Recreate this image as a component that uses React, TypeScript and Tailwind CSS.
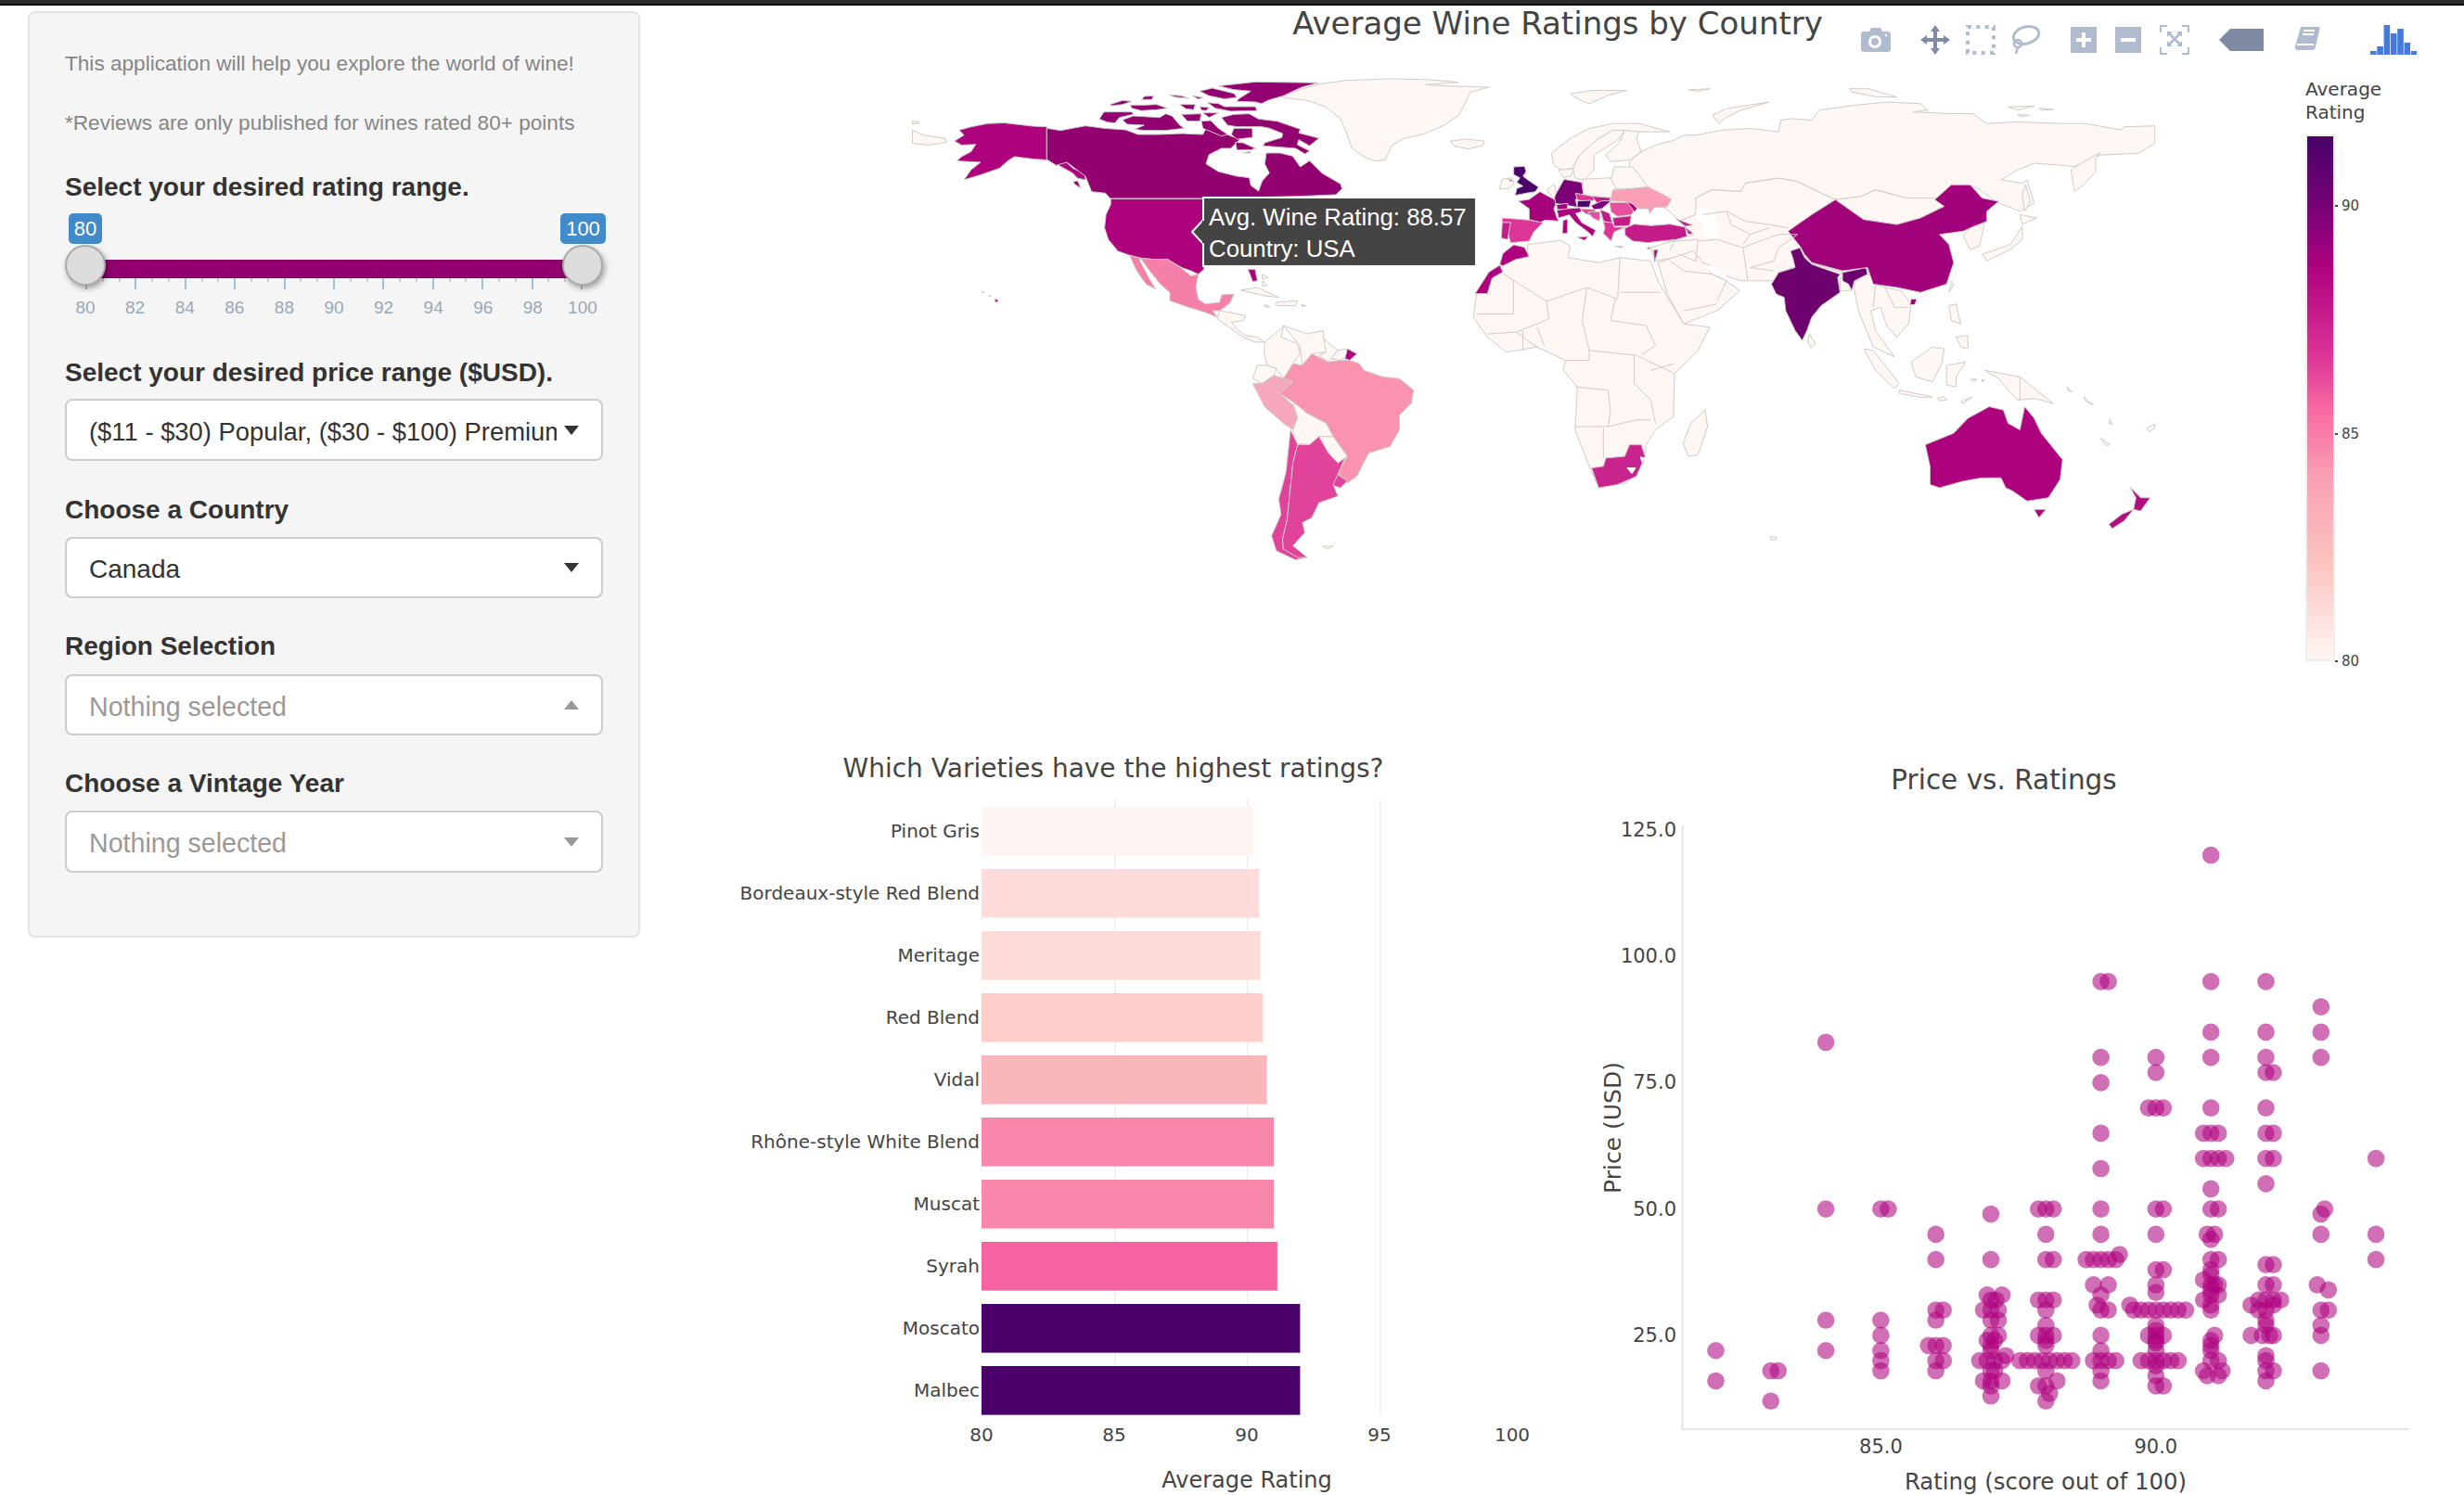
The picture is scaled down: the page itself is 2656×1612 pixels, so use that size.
import React from "react";

const LAND = "#fff7f3";
const EDGE = "#cfcbc9";
const CA = "#93006f";
type Poly = [string, string];

const z4: Poly[] = [
  [LAND, "825,125 870,100 910,85 960,75 1050,70 1130,72 1200,80 1130,88 1180,92 1265,95 1225,110 1215,140 1200,180 1190,190 1170,210 1130,235 1085,250 1060,270 1045,315 1020,318 1000,305 975,280 965,240 950,190 920,155 880,135 850,130"],
  [LAND, "1183,258 1215,252 1255,258 1250,272 1220,282 1190,272"],
  [LAND, "46,225 70,240 115,250 118,262 80,270 46,265"],
  [LAND, "46,198 60,200 60,205 46,206"],
  ["#ae017e", "330,215 300,213 240,203 205,205 170,215 145,225 155,240 135,258 150,270 180,268 170,290 150,305 140,318 165,320 190,322 170,345 155,375 190,360 230,340 250,315 262,305 300,312 330,315 345,322 370,320 385,340 410,355 412,375 395,370 385,355 360,335 330,315"],
  ["#ae017e", "465,432 662,432 662,645 650,660 635,650 615,640 605,632 585,615 555,615 530,612 505,603 480,590 460,555 452,520 455,480 465,450"],
  ["#ae017e", "755,645 770,645 775,680 765,682"],
  ["#ae017e", "221,735 228,738 225,745 220,742"],
  ["#ae017e", "193,712 197,714 195,717"],
  ["#ae017e", "208,724 212,726 209,728"],
  ["#f47fa9", "505,603 530,612 555,615 585,615 605,632 635,665 650,660 645,700 650,735 665,750 695,745 700,722 725,720 718,745 705,760 695,770 680,770 690,790 665,775 630,760 590,740 590,715 570,690 545,645 530,615 525,615 545,670 560,705 540,690 520,650"],
  [LAND, "695,770 715,775 750,785 745,800 720,805 735,830 750,845 775,850 790,865 770,865 745,850 720,825 690,795"],
  [LAND, "740,708 775,700 820,730 790,725"],
  [LAND, "815,745 860,740 855,755 815,755"],
  [LAND, "785,660 798,670 785,675"],
  [LAND, "787,680 795,695 785,695"],
  [LAND, "790,752 802,758 792,760"],
  [LAND, "868,752 878,755 870,758"],
  [LAND, "790,865 825,825 830,815 825,850 860,870 865,900 850,930 850,970 830,975 815,945 795,935 790,900"],
  [LAND, "830,815 880,840 915,830 915,855 935,880 920,895 890,900 870,935 865,880 850,850"],
  [LAND, "915,855 945,890 925,925 905,905 920,895"],
  [LAND, "945,890 965,885 965,905 950,920 930,915"],
  ["#ae017e", "965,885 985,900 970,920 960,915"],
  [LAND, "775,935 795,935 815,945 810,965 785,990 765,975"],
  ["#f8a8bd", "765,990 785,990 810,965 830,975 850,985 822,1020 850,1055 860,1095 850,1130 830,1110 790,1060"],
  ["#f993b0", "850,930 870,935 890,900 925,925 950,920 970,920 990,930 1000,950 1040,970 1075,975 1105,1010 1100,1050 1075,1085 1075,1130 1055,1180 1010,1200 985,1270 965,1290 945,1260 965,1210 935,1150 920,1110 880,1080 850,1045 822,1020 850,985 830,975"],
  [LAND, "850,1045 880,1080 920,1110 935,1150 905,1150 885,1175 858,1170 850,1130 860,1095"],
  [LAND, "905,1150 935,1150 965,1210 945,1230 925,1200"],
  ["#e2439a", "940,1260 965,1285 950,1305 930,1295"],
  ["#e2439a", "845,1130 860,1175 850,1230 842,1340 838,1400 828,1460 830,1490 880,1515 855,1522 815,1495 805,1450 825,1385 820,1340 835,1260"],
  ["#e2439a", "860,1175 885,1175 905,1150 925,1200 945,1230 960,1215 935,1295 945,1330 905,1350 890,1395 870,1410 875,1440 850,1480 880,1515 860,1515 830,1490 828,1460 838,1400 842,1340 850,1230"],
  [LAND, "912,1482 935,1480 925,1490"],
];

const z12: Poly[] = [
  [CA, "85,205 130,212 210,197 270,205 340,210 380,225 445,225 525,222 590,225 600,205 620,205 685,232 710,240 700,250 680,270 650,270 610,290 600,320 640,345 700,360 740,365 745,390 770,408 782,375 805,350 790,320 795,285 840,285 880,295 905,330 935,310 975,350 1035,385 1040,400 1020,420 900,425 590,432 290,432 275,415 230,410 210,360 150,315 115,325 85,305"],
  [CA, "650,170 690,160 740,158 770,175 830,182 905,208 900,220 965,237 935,262 900,242 895,258 935,278 920,288 890,270 785,262 790,252 845,235 848,222 805,205 780,200 700,200 670,195"],
  ["#ffffff", "795,222 820,218 835,228 800,232"],
  [CA, "695,250 720,252 760,270 745,275 700,275"],
  [CA, "720,285 745,280 740,285"],
  [CA, "690,205 750,205 750,235 700,240 682,225"],
  [CA, "640,68 760,55 965,58 910,72 850,100 800,115 780,125 760,120 700,118 705,110 745,85 690,80"],
  [CA, "580,85 620,75 690,92 700,105 660,110 610,100"],
  [CA, "605,122 640,125 660,135 760,135 765,148 680,150 630,140"],
  [CA, "480,97 520,100 545,108 500,104"],
  [CA, "555,100 590,105 575,110"],
  [CA, "400,102 430,100 425,112 392,112"],
  [CA, "290,128 330,115 360,118 330,128 295,132"],
  [CA, "355,130 400,130 440,128 475,140 440,145 390,148 360,140"],
  [CA, "515,128 565,128 560,145 535,142"],
  [CA, "580,135 610,138 600,148 585,146"],
  [CA, "255,175 270,152 360,152 365,160 320,170 305,188 280,185"],
  [CA, "330,178 365,165 450,170 470,158 490,165 515,195 530,205 470,212 400,212 370,208 400,195 345,192"],
  [CA, "520,160 585,158 580,182 540,182"],
  [CA, "590,155 640,155 610,170"],
  [CA, "585,182 615,180 640,205 670,225 650,230 590,205"],
  [CA, "170,378 185,375 195,398 178,388"],
];

const z5: Poly[] = [
  [LAND, "440,270 480,255 500,240 525,240 580,225 640,220 700,230 705,195 725,190 770,195 785,165 860,150 930,140 1000,145 1015,165 985,170 1060,175 1110,175 1140,205 1200,200 1300,205 1350,205 1425,225 1430,215 1495,212 1495,265 1460,295 1380,300 1325,335 1290,330 1240,325 1205,345 1170,375 1215,385 1225,375 1240,445 1210,470 1165,445 1120,400 1085,390 1060,420 1030,430 1000,435 970,430 905,405 875,425 820,435 790,415 740,380 700,370 630,385 620,410 560,405 525,430 535,465 525,480 490,500 470,470 440,445 410,405 400,380 385,355 385,320 410,290"],
  [LAND, "1380,292 1340,325 1318,345 1325,410 1345,390 1370,350 1370,310"],
  [LAND, "560,180 590,160 680,140 620,165 585,190 575,205"],
  [LAND, "260,115 305,105 380,105 340,120 300,145 275,130"],
  [LAND, "510,103 555,100 530,108"],
  [LAND, "850,100 890,100 950,125 910,125 855,110"],
  [LAND, "1185,155 1240,152 1205,165"],
  [LAND, "1250,158 1280,163 1255,165"],
  [LAND, "1205,178 1230,180 1210,184"],
  [LAND, "1222,390 1232,440 1220,470 1215,420"],
  [LAND, "220,295 260,250 300,220 350,205 405,205 470,230 405,230 350,225 315,255 280,300 265,340 240,345 225,330"],
  [LAND, "280,300 315,255 350,225 375,225 360,255 310,300 310,345 290,375 270,370 265,340"],
  [LAND, "375,225 405,230 400,250 410,290 385,315 345,320 335,300 365,260"],
  [LAND, "170,570 240,558 260,575 255,610 320,625 365,610 430,620 445,680 470,740 500,810 555,820 530,890 480,960 478,1090 440,1130 420,1175 415,1230 380,1290 320,1305 300,1240 270,1130 275,1000 245,950 250,920 190,880 125,895 85,850 55,790 62,720 100,650 120,630 170,600"],
  [LAND, "545,1070 550,1120 530,1205 510,1210 498,1170 515,1110"],
  ["#c9248e", "410,1175 418,1210 400,1270 360,1295 320,1305 305,1245 330,1240 335,1215 375,1210 385,1175"],
  ["#ffffff", "380,1245 398,1245 390,1262"],
  ["#ffffff", "408,1212 418,1215 412,1228"],
  [LAND, "525,430 560,405 620,410 630,385 700,370 740,380 790,415 820,435 770,480 720,530 750,580 760,625 700,655 690,680 620,680 590,665 550,630 530,625 480,610 440,620 430,580 520,540 490,500 525,480"],
  [LAND, "445,625 520,590 560,660 590,680 618,710 570,770 500,810 465,720"],
  ["#ffffff", "528,465 550,460 565,480 575,520 570,555 545,545 540,510 525,490"],
  ["#ffffff", "540,630 565,640 590,665 560,655"],
  [LAND, "820,435 875,425 905,405 970,430 1030,430 1050,455 1000,490 950,510 880,495"],
  [LAND, "830,670 855,680 850,710 830,710"],
  [LAND, "765,625 835,655 825,668 775,645"],
  [LAND, "860,685 890,650 905,690 925,700 960,710 980,750 975,810 950,850 930,820 915,760 895,770 905,830 945,910 900,880 870,775 860,710"],
  [LAND, "765,840 778,870 768,882 762,865"],
  ["#6f016f", "725,590 745,580 755,610 770,630 830,660 825,670 830,715 790,755 770,790 760,830 750,860 735,830 715,770 712,730 695,720 685,690 700,655 735,640 730,610"],
  ["#6f016f", "835,655 885,640 888,660 860,680 855,710 848,690 835,680"],
  ["#a1017b", "720,530 770,480 820,435 880,495 950,510 1000,490 1050,455 1030,435 1065,390 1105,390 1130,430 1165,440 1140,470 1140,500 1090,530 1040,540 1060,570 1070,625 1055,690 1000,715 950,700 900,690 888,640 835,650 770,625 755,600 745,575"],
  ["#a1017b", "980,735 992,735 988,752 978,752"],
  [LAND, "1065,680 1070,690 1060,715"],
  [LAND, "1105,520 1135,505 1125,575 1105,585 1090,545"],
  [LAND, "1130,600 1190,570 1215,515 1215,555 1190,585 1140,620"],
  [LAND, "1210,480 1245,490 1215,510"],
  [LAND, "880,885 900,890 955,990 945,1005 905,950"],
  [LAND, "955,1010 1025,1030 1000,1032 955,1020"],
  [LAND, "980,925 1025,880 1050,885 1045,930 1025,985 990,970"],
  [LAND, "1055,935 1095,925 1075,970 1075,1000 1055,995"],
  [LAND, "1135,950 1210,970 1280,1050 1240,1035 1205,1040 1185,1010 1165,975"],
  [LAND, "1060,755 1075,750 1085,810 1065,800"],
  [LAND, "1075,850 1100,845 1100,885 1085,880"],
  [LAND, "1085,1045 1110,1030 1090,1050"],
  [LAND, "1035,1035 1050,1030 1055,1040 1040,1042"],
  [LAND, "1105,978 1118,975 1115,985"],
  [LAND, "1130,978 1135,980 1130,985"],
  [LAND, "1310,1000 1320,1015 1312,1012"],
  [LAND, "1345,1030 1365,1055 1350,1045"],
  [LAND, "1400,1098 1405,1115 1398,1110"],
  [LAND, "1380,1155 1400,1175 1392,1178"],
  [LAND, "1478,1125 1495,1113 1495,1125 1482,1135"],
  [LAND, "683,1452 696,1455 692,1463 684,1461"],
  ["#ae017e", "1010,1175 1070,1140 1100,1095 1145,1060 1175,1070 1185,1110 1210,1130 1220,1060 1240,1095 1255,1140 1300,1220 1295,1280 1270,1335 1225,1345 1195,1315 1180,1305 1170,1275 1130,1275 1090,1285 1040,1305 1020,1295 1020,1240"],
  ["#ae017e", "1240,1370 1265,1370 1250,1395"],
  ["#b0107f", "1443,1303 1465,1335 1485,1335 1465,1375 1450,1370 1455,1335"],
  ["#b0107f", "1450,1370 1430,1405 1405,1428 1398,1415 1425,1385"],
];

const z10: Poly[] = [
  [LAND, "378,100 470,95 485,125 470,160 410,155 358,143 380,140"],
  [LAND, "470,100 480,60 540,60 590,125 540,130 485,130"],
  [LAND, "300,70 350,65 340,90 315,95"],
  [LAND, "262,135 285,115 295,150 285,165"],
  [LAND, "108,132 118,100 150,95 155,115 140,130"],
  ["#49006a", "137,98 152,105 145,107"],
  ["#49006a", "155,60 190,58 195,75 185,90 205,105 235,125 225,140 195,145 160,152 165,130 185,122 165,110 175,95 155,85"],
  ["#a5017d", "170,170 205,165 240,140 295,170 285,195 295,225 300,235 255,232 240,240 205,230 205,195"],
  ["#7a0177", "290,150 318,100 375,110 380,145 355,165 360,190 290,178 287,160"],
  ["#dd3497", "355,145 410,155 425,165 385,175 360,165"],
  ["#c51b8a", "410,155 470,160 460,175 425,178"],
  ["#a5017d", "293,182 330,178 328,198 297,198"],
  ["#49006a", "362,170 405,168 400,190 360,190"],
  ["#7a0177", "405,185 440,170 470,170 440,195 415,198"],
  ["#ae017e", "295,200 330,195 370,192 375,205 355,210 375,240 420,265 410,285 395,270 355,240 335,215 300,225"],
  ["#ae017e", "315,232 330,230 328,275 312,275"],
  ["#ae017e", "360,287 395,285 385,298"],
  ["#e2439a", "370,195 415,198 440,225 400,215 385,210"],
  ["#e8509f", "395,205 435,205 432,235 410,225"],
  ["#c51b8a", "435,198 465,210 475,245 445,235"],
  ["#e8509f", "465,175 520,175 545,200 535,215 490,220 470,205"],
  ["#ae017e", "520,172 535,172 555,195 545,205"],
  ["#c51b8a", "475,225 535,218 530,250 480,252"],
  ["#dd3497", "445,238 475,240 480,255 515,255 480,270 470,300 445,275 450,258"],
  ["#c51b8a", "515,258 545,245 600,250 660,245 710,255 715,285 680,295 630,300 590,305 540,300 515,280"],
  ["#c51b8a", "680,228 735,248 710,252"],
  ["#c51b8a", "710,255 735,275 720,278"],
  ["#c51b8a", "585,322 598,320 592,327"],
  ["#c51b8a", "482,316 510,318 500,321"],
  ["#ae017e", "608,328 622,328 610,370"],
  ["#fa9fb5", "470,160 475,135 540,130 590,125 650,155 665,165 650,190 610,190 595,210 590,195 560,195 540,180 520,172 470,170"],
  ["#dd3497", "118,225 205,232 250,240 220,270 205,300 145,305 135,270 145,240 118,240"],
  ["#c51b8a", "118,240 145,240 135,295 115,290"],
  ["#ae017e", "155,312 190,320 205,350 160,360 120,380 110,375 120,340"],
  ["#ae017e", "75,400 110,378 120,400 85,420 70,470 30,470"],
];

const borderLines = [
  "120,660 210,742 295,700 360,735 365,610",
  "365,715 450,715",
  "295,700 285,800 300,890 300,920",
  "140,680 140,780 62,780",
  "210,742 215,795 145,835",
  "345,800 355,735",
  "345,800 420,815 440,875 410,905",
  "300,890 400,905 480,960",
  "395,905 395,990 430,1040 440,1110",
  "270,1000 340,1010 345,1075 340,1120 270,1120",
  "330,1125 330,1215",
  "340,1120 400,1100 430,1100",
  "250,920 300,920",
  "85,840 145,835 190,880",
  "160,830 160,890",
  "190,820 205,875",
  "430,950 480,930",
  "540,480 590,470 630,500 680,510 720,520",
  "590,470 600,510 640,540 680,520",
  "640,540 625,570",
  "625,580 660,560 700,540 740,540 700,580 690,620 640,640",
  "640,640 690,650",
  "530,560 570,555 625,580 635,680",
  "480,560 530,555 525,620 490,600",
  "450,560 480,560 470,590",
  "470,620 500,650 560,660 590,680",
  "500,770 570,750",
  "590,680 570,740",
  "905,690 900,760",
  "925,700 945,760 975,760",
  "1210,970 1210,1040",
];

const GRAD = "bg-[linear-gradient(to_bottom,#49006a_0%,#7a0177_14%,#ae017e_25%,#dd3497_42%,#f768a1_52%,#fa9fb5_65%,#fcc5c0_82%,#fde0dd_92%,#fff7f3_100%)]";

function PolyGroup({ items, t }: { items: Poly[]; t: string }) {
  return (
    <g transform={t}>
      {items.map(([fill, pts], i) => (
        <polygon key={i} points={pts} fill={fill} stroke={fill === "#ffffff" ? "#ffffff" : EDGE} strokeWidth={1} vectorEffect="non-scaling-stroke" strokeLinejoin="round" />
      ))}
    </g>
  );
}

const bars: [string, number, string][] = [
  ["Pinot Gris", 1351, "#fff5f2"],
  ["Bordeaux-style Red Blend", 1357.4, "#fddcdb"],
  ["Meritage", 1358.6, "#fddbd7"],
  ["Red Blend", 1361, "#fdcdc9"],
  ["Vidal", 1365.6, "#fbb6bc"],
  ["Rhône-style White Blend", 1373, "#f986ab"],
  ["Muscat", 1373, "#f986ab"],
  ["Syrah", 1376.8, "#f564a0"],
  ["Moscato", 1401.4, "#49006a"],
  ["Malbec", 1401.4, "#49006a"],
];

const pts: [number, number, number?][] = [
  [82,22],[82,16],[83,18],[83,18,1],[83,12],[84,83],[84,50],[84,28],[84,22],
  [85,50],[85,50,1],[85,28],[85,25],[85,22],[85,20],[85,18],
  [86,45],[86,40],[86,30],[86,30,1],[86,28],[86,23,-1],[86,23],[86,23,1],[86,20],[86,20,1],[86,18],
  [87,49],[87,40],[87,33,-.5],[87,33,1.5],[87,32],[87,32,.7],[87,30,-1],[87,30],[87,30,1],[87,28],[87,28,1],[87,25],[87,25,1],[87,24,-.5],[87,24,.5],[87,23],[87,22],[87,21,2],[87,20,-1.5],[87,20,-.5],[87,20,.5],[87,20,1.5],[87,18],[87,18,.5],[87,16,-1],[87,16],[87,16,1.5],[87,15],[87,13],
  [88,50,-1],[88,50],[88,50,1],[88,45],[88,40],[88,40,1],[88,32,-1],[88,32],[88,32,1],[88,30],[88,27],[88,25,-1],[88,25],[88,25,1],[88,24],[88,23],[88,20,-3.5],[88,20,-2.5],[88,20,-1.5],[88,20,-.5],[88,20,.5],[88,20,1.5],[88,20,2.5],[88,20,3.5],[88,18],[88,15,-1],[88,15],[88,16,1.5],[88,13.5,.5],[88,12],
  [89,95],[89,95,1],[89,80],[89,75],[89,65],[89,58],[89,50],[89,45],[89,41,2.5],[89,40,-2],[89,40,-1],[89,40],[89,40,1],[89,40,2],[89,35,-1],[89,35,1],[89,33],[89,31,-.5],[89,30],[89,30,1],[89,25],[89,22],[89,20,-1],[89,20],[89,20,1],[89,20,2],[89,18],[89,16],
  [90,80],[90,77],[90,70,-1],[90,70],[90,70,1],[90,50],[90,50,1],[90,45],[90,38],[90,38,1],[90,35],[90,33.5],[90,31,-3.5],[90,30,-3],[90,30,-2],[90,30,-1],[90,30],[90,30,1],[90,30,2],[90,30,3],[90,30,4],[90,27],[90,26],[90,25,-1],[90,25],[90,25,1],[90,24],[90,23.5],[90,22],[90,20,-2],[90,20,-1],[90,20],[90,20,1],[90,20,2],[90,20,3],[90,19],[90,17],[90,15],[90,15,1],
  [91,120],[91,95],[91,85],[91,80],[91,70],[91,65,-1],[91,65],[91,65,1],[91,60,-1],[91,60],[91,60,1],[91,60,2],[91,54],[91,50],[91,50,1],[91,45,-.5],[91,45,.5],[91,44],[91,40],[91,40,1],[91,38],[91,37],[91,36,-1],[91,35],[91,35,.5],[91,35,1],[91,34],[91,33],[91,33,1],[91,32,-1],[91,31],[91,30],[91,25,.5],[91,24],[91,23],[91,22],[91,20],[91,20,1],[91,18,-1],[91,18,1.5],[91,17,-.5],[91,17,1],
  [92,95],[92,85],[92,80],[92,77],[92,77,1],[92,70],[92,65],[92,65,1],[92,60],[92,60,1],[92,55],[92,39],[92,39,1],[92,35],[92,35,1],[92,32,-1],[92,32],[92,32,1],[92,32,2],[92,31,-2],[92,30,-1],[92,31,1],[92,30],[92,28],[92,27],[92,25,-2],[92,25,-.5],[92,25,.5],[92,25,1],[92,21],[92,20],[92,18],[92,18,1],[92,16],
  [93,90],[93,85],[93,80],[93,50,.5],[93,49],[93,45],[93,35,-.5],[93,34,1],[93,30],[93,30,1],[93,27],[93,25],[93,18],
  [94,60],[94,45],[94,40],
];

function Caret({ up, color }: { up?: boolean; color: string }) {
  return (
    <svg width="16" height="10" viewBox="0 0 16 10" className="shrink-0">
      <polygon points={up ? "8,0 16,10 0,10" : "0,0 16,0 8,10"} fill={color} />
    </svg>
  );
}

function Select({ text, muted, up, h, size }: { text: string; muted?: boolean; up?: boolean; h: string; size: string }) {
  return (
    <div className={`${h} w-[580px] rounded-lg border-2 border-[#cccccc] bg-white flex items-center pl-[24px] pr-[24px]`}>
      <div className={`w-[504px] mr-[8px] pt-[4px] whitespace-nowrap overflow-hidden ${size} ${muted ? "text-[#999999]" : "text-[#333333]"}`}>{text}</div>
      <Caret up={up} color={muted ? "#999999" : "#333333"} />
    </div>
  );
}

function Slider() {
  const labels = ["80", "82", "84", "86", "88", "90", "92", "94", "96", "98", "100"];
  return (
    <div className="relative mt-[8px] h-[122px] w-[580px]">
      <div className="absolute left-[4px] top-[2px] h-[33px] w-[36px] rounded-[5px] bg-[#428bca] text-white text-[22px] flex items-center justify-center">80</div>
      <div className="absolute left-[534px] top-[2px] h-[33px] w-[49px] rounded-[5px] bg-[#428bca] text-white text-[22px] flex items-center justify-center">100</div>
      <div className="absolute left-[22px] top-[52px] h-[20px] w-[536px] bg-[#93006f] border-y border-[#82005f]" />
      <div className="absolute left-[22px] top-[72px] w-[536px] flex justify-between">
        {Array.from({ length: 31 }).map((_, i) => (
          <div key={i} className={i % 3 === 0 ? "w-[2px] h-[12px] bg-[#9cc0df]" : "w-[2px] h-[4px] bg-[#cccccc]"} />
        ))}
      </div>
      <div className="absolute left-[22px] top-[92px] w-[536px] flex justify-between">
        {labels.map((l) => (
          <div key={l} className="w-0 flex justify-center text-[19px] leading-[24px] text-[#9aa8b5]">{l}</div>
        ))}
      </div>
      <div className="absolute left-0 top-[36px] h-[44px] w-[44px] rounded-full bg-[#dddddd] border-2 border-[#aaaaaa] shadow-[2px_3px_6px_rgba(0,0,0,0.35)]" />
      <div className="absolute left-[536px] top-[36px] h-[44px] w-[44px] rounded-full bg-[#dddddd] border-2 border-[#aaaaaa] shadow-[2px_3px_6px_rgba(0,0,0,0.35)]" />
    </div>
  );
}

function Sidebar() {
  const label = "h-[36px] leading-[36px] text-[28px] font-bold text-[#333333] whitespace-nowrap";
  const para = "h-[32px] leading-[32px] text-[22.6px] text-[#868686] whitespace-nowrap";
  return (
    <aside className="ml-[30px] mt-[6px] h-[999px] w-[660px] shrink-0 rounded-lg border-2 border-[#e3e3e3] bg-[#f5f5f5] pt-[39px] pl-[38px]">
      <p className={para}>This application will help you explore the world of wine!</p>
      <p className={`${para} mt-[32px]`}>*Reviews are only published for wines rated 80+ points</p>
      <div className={`${label} mt-[35px]`}>Select your desired rating range.</div>
      <Slider />
      <div className={`${label} mt-[34px]`}>Select your desired price range ($USD).</div>
      <div className="mt-[10px]"><Select h="h-[67px]" size="text-[27.4px]" text="($11 - $30) Popular, ($30 - $100) Premium" /></div>
      <div className={`${label} mt-[35px]`}>Choose a Country</div>
      <div className="mt-[11px]"><Select h="h-[66px]" size="text-[28px]" text="Canada" /></div>
      <div className={`${label} mt-[34px]`}>Region Selection</div>
      <div className="mt-[12px]"><Select h="h-[66px]" size="text-[28.6px]" text="Nothing selected" muted up /></div>
      <div className={`${label} mt-[34px]`}>Choose a Vintage Year</div>
      <div className="mt-[11px]"><Select h="h-[67px]" size="text-[28.6px]" text="Nothing selected" muted /></div>
    </aside>
  );
}

const L = "#b1bbd0";
const D = "#7f8ba5";

function Toolbar() {
  return (
    <div className="absolute left-[1316px] top-[15px] flex items-start">
      <svg width="32" height="26" viewBox="0 0 32 26" className="mt-[9px]">
        <path d="M3 4h6l2-4h10l2 4h6a3 3 0 0 1 3 3v16a3 3 0 0 1-3 3H3a3 3 0 0 1-3-3V7a3 3 0 0 1 3-3z" fill={L} />
        <circle cx="15" cy="15" r="7" fill="#ffffff" /><circle cx="15" cy="15" r="4" fill={L} /><circle cx="27" cy="8" r="1.2" fill="#fff" />
      </svg>
      <svg width="32" height="32" viewBox="0 0 32 32" className="ml-[32px] mt-[6px]">
        <path d="M16 0l5 7h-3v7h7v-3l7 5-7 5v-3h-7v7h3l-5 7-5-7h3v-7H7v3l-7-5 7-5v3h7V7h-3z" fill={D} />
      </svg>
      <svg width="32" height="32" viewBox="0 0 32 32" className="ml-[17px] mt-[6px]">
        <rect x="2" y="2" width="28" height="28" fill="none" stroke={L} strokeWidth="4" strokeDasharray="4 5.33" />
      </svg>
      <svg width="32" height="32" viewBox="0 0 32 32" className="ml-[16px] mt-[6px]">
        <ellipse cx="17" cy="11" rx="14" ry="9" fill="none" stroke={L} strokeWidth="3" transform="rotate(-15 17 11)" />
        <circle cx="8" cy="20" r="4" fill="none" stroke={L} strokeWidth="2.5" />
        <path d="M8 24l-2 7" stroke={L} strokeWidth="2.5" fill="none" />
      </svg>
      <svg width="28" height="28" viewBox="0 0 28 28" className="ml-[33px] mt-[8px]">
        <rect width="28" height="28" fill={L} /><path d="M12 6h4v6h6v4h-6v6h-4v-6H6v-4h6z" fill="#fff" />
      </svg>
      <svg width="28" height="28" viewBox="0 0 28 28" className="ml-[20px] mt-[8px]">
        <rect width="28" height="28" fill={L} /><rect x="6" y="12" width="16" height="4" fill="#fff" />
      </svg>
      <svg width="32" height="32" viewBox="0 0 32 32" className="ml-[20px] mt-[6px]">
        <path d="M1 8V1h7M24 1h7v7M31 24v7h-7M8 31H1v-7" fill="none" stroke={L} strokeWidth="2" />
        <path d="M8 7h6l-2 2 4 4 4-4-2-2h6v6l-2-2-4 4 4 4 2-2v6h-6l2-2-4-4-4 4 2 2H8v-6l2 2 4-4-4-4-2 2z" fill={L} />
      </svg>
      <svg width="48" height="24" viewBox="0 0 48 24" className="ml-[32px] mt-[10px]">
        <polygon points="0,12 12,0 48,0 48,24 12,24" fill={D} />
      </svg>
      <svg width="28" height="26" viewBox="0 0 28 26" className="ml-[33px] mt-[8px]">
        <path d="M7 0h21l-5 21a4 4 0 0 1-4 4H4a3 3 0 0 1-3-4z" fill={L} />
        <path d="M10 4h12M9 8h12" stroke="#fff" strokeWidth="2" />
        <path d="M3 19h18" stroke="#fff" strokeWidth="2" />
      </svg>
      <svg width="50" height="32" viewBox="0 0 50 32" className="ml-[54px] mt-[6px]">
        {[4, 9, 32, 23, 28, 13, 4].map((h, i) => (
          <rect key={i} x={i * 7.3} y={32 - h} width="6.6" height={h} fill="#447adb" />
        ))}
      </svg>
    </div>
  );
}

function Tooltip() {
  return (
    <div className="absolute left-[594px] top-[206px] flex items-center">
      <svg width="14" height="28" viewBox="0 0 14 28" className="mr-[-2px] relative z-10">
        <polygon points="14,0 1,14 14,28" fill="#444444" stroke="#ffffff" strokeWidth="2" />
        <rect x="12" y="2" width="3" height="24" fill="#444444" />
      </svg>
      <div className="h-[76px] w-[296px] bg-[#444444] border-2 border-white text-white text-[25.8px] leading-[34px] pl-[5px] py-[3px] whitespace-nowrap">
        <div>Avg. Wine Rating: 88.57</div>
        <div>Country: USA</div>
      </div>
    </div>
  );
}

const font = "'DejaVu Sans', sans-serif";

function MapPanel() {
  return (
    <div className="relative h-[790px] w-full shrink-0">
      <svg className="block" width="1966" height="790" viewBox="690 6 1966 790">
        <text x="1679" y="25" textAnchor="middle" dominantBaseline="central" fontSize="34" fill="#444444" fontFamily={font}>Average Wine Ratings by Country</text>
        <PolyGroup items={z4} t="translate(960 60) scale(0.5102 0.3571)" />
        <PolyGroup items={z12} t="translate(1100 70) scale(0.3333)" />
        <PolyGroup items={z5} t="translate(1560 60) scale(0.5102 0.3571)" />
        <g transform="translate(1560 60) scale(0.5102 0.3571)" fill="none" stroke={EDGE} strokeWidth="1">
          {borderLines.map((p, i) => (<polyline key={i} points={p} vectorEffect="non-scaling-stroke" />))}
        </g>
        <PolyGroup items={z10} t="translate(1580 160) scale(0.3333)" />
        <text x="2485" y="96" dominantBaseline="central" fontSize="20" fill="#444444" fontFamily={font}>Average</text>
        <text x="2485" y="121" dominantBaseline="central" fontSize="20" fill="#444444" fontFamily={font}>Rating</text>
        {[["90", 222], ["85", 468], ["80", 713]].map(([t, y]) => (
          <g key={t as string}>
            <rect x="2517" y={(y as number) - 1} width="3" height="2" fill="#444444" />
            <text x="2524" y={y as number} dominantBaseline="central" fontSize="15" fill="#444444" fontFamily={font}>{t}</text>
          </g>
        ))}
      </svg>
      <div className={`absolute left-[1795px] top-[139px] h-[568px] w-[32px] border-2 border-[#eeeeee] ${GRAD}`} />
      <Toolbar />
      <Tooltip />
    </div>
  );
}

function BarChart() {
  return (
    <svg className="block shrink-0" width="1000" height="816" viewBox="690 796 1000 816">
      <text x="1200" y="828" textAnchor="middle" dominantBaseline="central" fontSize="28" fill="#444444" fontFamily={font}>Which Varieties have the highest ratings?</text>
      {[1201, 1344, 1487].map((x) => (<rect key={x} x={x} y="862" width="2" height="663" fill="#f1f1f1" />))}
      {bars.map(([name, end, c], i) => (
        <g key={name}>
          <rect x="1058" y={870 + i * 67} width={end - 1058} height="52.6" fill={c} />
          <text x="1056" y={896 + i * 67} textAnchor="end" dominantBaseline="central" fontSize="20" fill="#444444" fontFamily={font}>{name}</text>
        </g>
      ))}
      {[["80", 1058], ["85", 1201], ["90", 1344], ["95", 1487], ["100", 1630]].map(([t, x]) => (
        <text key={t as string} x={x as number} y="1547" textAnchor="middle" dominantBaseline="central" fontSize="20" fill="#444444" fontFamily={font}>{t}</text>
      ))}
      <text x="1344" y="1596" textAnchor="middle" dominantBaseline="central" fontSize="24" fill="#444444" fontFamily={font}>Average Rating</text>
    </svg>
  );
}

function Scatter() {
  const px = (r: number, k = 0) => 2027.4 + (r - 85) * 59.3 + k * 8;
  const py = (v: number) => 1439.9 - (v - 25) * 5.45;
  return (
    <svg className="block shrink-0" width="966" height="816" viewBox="1690 796 966 816">
      <text x="2160" y="841" textAnchor="middle" dominantBaseline="central" fontSize="29.5" fill="#444444" fontFamily={font}>Price vs. Ratings</text>
      <rect x="1812.5" y="890" width="2" height="652" fill="#e5e5e5" />
      <rect x="1812.5" y="1540" width="784" height="2" fill="#e5e5e5" />
      {pts.map(([r, v, k], i) => (<circle key={i} cx={px(r, k)} cy={py(v)} r="9.3" fill="#ae017e" fillOpacity="0.57" />))}
      {[125, 100, 75, 50, 25].map((v) => (
        <text key={v} x="1807" y={py(v)} textAnchor="end" dominantBaseline="central" fontSize="21" fill="#444444" fontFamily={font}>{v.toFixed(1)}</text>
      ))}
      <text x="2027.4" y="1560" textAnchor="middle" dominantBaseline="central" fontSize="21" fill="#444444" fontFamily={font}>85.0</text>
      <text x="2323.8" y="1560" textAnchor="middle" dominantBaseline="central" fontSize="21" fill="#444444" fontFamily={font}>90.0</text>
      <text x="2205" y="1597" textAnchor="middle" dominantBaseline="central" fontSize="24.4" fill="#444444" fontFamily={font}>Rating (score out of 100)</text>
      <text transform="translate(1738 1216) rotate(-90)" textAnchor="middle" dominantBaseline="central" fontSize="25" fill="#444444" fontFamily={font}>Price (USD)</text>
    </svg>
  );
}

export default function App() {
  return (
    <div className="h-[1612px] w-[2656px] overflow-hidden bg-white font-['Liberation_Sans',sans-serif]">
      <div className="h-[4px] bg-[#2d2d2d]" />
      <div className="h-[2px] bg-black" />
      <div className="flex">
        <Sidebar />
        <main className="flex flex-col w-[1966px]">
          <MapPanel />
          <div className="flex">
            <BarChart />
            <Scatter />
          </div>
        </main>
      </div>
    </div>
  );
}
